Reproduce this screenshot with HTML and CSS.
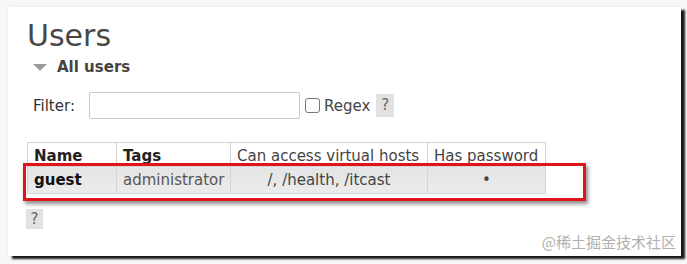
FILE: index.html
```html
<!DOCTYPE html>
<html lang="en">
<head>
  <meta charset="UTF-8">
  <title>Users</title>
  <link rel="stylesheet" href="styles.css">
</head>
<body>
  <div class="panel">
    <h1>Users</h1>
    <h2 class="section-title"><span class="arrow"></span>All users</h2>

    <!-- Filter row -->
    <div class="filter">
      <label for="filter">Filter:</label>
      <input type="text" id="filter">
      <span class="check"></span>
      <span class="regex">Regex</span>
      <span class="help">?</span>
    </div>

    <!-- Users table, highlighted row wrapped in a red box -->
    <div class="table-wrap">
      <table class="list">
        <thead>
          <tr>
            <th class="col-name bold">Name</th>
            <th class="col-tags bold">Tags</th>
            <th class="col-vhosts">Can access virtual hosts</th>
            <th class="col-pass">Has password</th>
          </tr>
        </thead>
        <tbody>
          <tr>
            <td class="user">guest</td>
            <td class="tags">administrator</td>
            <td class="center">/, /health, /itcast</td>
            <td class="center">&#8226;</td>
          </tr>
        </tbody>
      </table>
      <div class="highlight"></div>
    </div>

    <span class="help help-below">?</span>

    <div class="watermark">@稀土掘金技术社区</div>
  </div>
</body>
</html>
```

FILE: styles.css
```css
/* Page + screenshot frame */
body {
  margin: 0;
  height: 264px;
  background: #f8f8f8;
  font-family: "DejaVu Sans", Verdana, sans-serif;
  color: #444;
  overflow: hidden;
}
.panel {
  position: relative;
  box-sizing: border-box;
  width: 673px;
  height: 249px;
  margin: 7px 0 0 8px;
  padding: 11px 0 0 19px;
  background: #fff;
  box-shadow: 4px 3px 2px rgba(0,0,0,0.9), 0 0 3px rgba(0,0,0,0.08);
}
h1 {
  margin: 0;
  font-size: 30px;
  line-height: 36px;
  font-weight: normal;
  color: #474747;
}
.section-title {
  display: flex;
  align-items: center;
  margin: 2px 0 0 6px;
  font-size: 15px;
  line-height: 22px;
  font-weight: bold;
  color: #444;
}
.arrow {
  width: 0;
  height: 0;
  margin: 1px 10px 0 0;
  border-left: 7px solid transparent;
  border-right: 7px solid transparent;
  border-top: 7px solid #9a9a9a;
}
/* Filter row */
.filter {
  display: flex;
  align-items: center;
  margin: 14px 0 0 6px;
  font-size: 15px;
  color: #333;
}
.filter input {
  box-sizing: border-box;
  width: 211px;
  height: 27px;
  margin: 0 5px 0 14px;
  border: 1px solid #c8c8c8;
  border-radius: 2px;
}
.check {
  box-sizing: border-box;
  width: 15px;
  height: 15px;
  margin-right: 4px;
  border: 1px solid #777;
  border-radius: 3px;
  background: #fff;
}
.regex {
  margin-right: 6px;
  color: #444;
}
.help {
  display: inline-block;
  box-sizing: border-box;
  width: 18px;
  height: 23px;
  line-height: 23px;
  text-align: center;
  font-size: 15px;
  color: #666;
  background: #e2e2e2;
}
/* Table */
.table-wrap {
  position: relative;
  margin-top: 23px;
  width: 518px;
}
.list {
  width: 518px;
  table-layout: fixed;
  border-collapse: collapse;
  font-size: 15px;
  white-space: nowrap;
}
.list th {
  box-sizing: border-box;
  height: 24px;
  padding: 3px 6px 0;
  border: 1px solid #d2d2d2;
  border-bottom: none;
  text-align: left;
  vertical-align: bottom;
  font-weight: normal;
  color: #444;
  line-height: 20px;
}
.list th.bold {
  font-weight: bold;
  color: #222;
}
.col-name { width: 89px; }
.col-tags { width: 114px; }
.col-vhosts { width: 197px; }
.col-pass { width: 118px; }
.list td {
  height: 26px;
  padding: 0 6px;
  border: 1px solid #d4d4d4;
  background: linear-gradient(#e4e4e4, #ececec);
  color: #555;
}
.list td.user {
  font-weight: bold;
  color: #111;
}
.list td.center {
  text-align: center;
  color: #444;
}
/* Red marker box drawn over the data row */
.highlight {
  position: absolute;
  left: -4px;
  top: 21px;
  width: 557px;
  height: 32px;
  border: 3px solid #e0141b;
  box-shadow: 2px 3px 4px rgba(0,0,0,0.45);
  pointer-events: none;
}
.help-below {
  margin: 15px 0 0 -1px;
  height: 20px;
  line-height: 20px;
  width: 17px;
}
.watermark {
  position: absolute;
  right: 5px;
  bottom: 4px;
  font-family: "Noto Sans CJK SC", "DejaVu Sans", sans-serif;
  font-size: 15px;
  color: #b0b0b0;
}
```
